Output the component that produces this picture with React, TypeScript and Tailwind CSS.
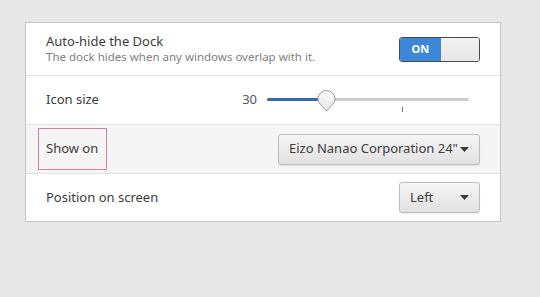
import React from "react";

const Caret = () => (
  <svg width="9" height="5" viewBox="0 0 9 5" className="block">
    <path d="M0 0 H9 L4.5 5 Z" fill="#3a3a3a" />
  </svg>
);

export default function App() {
  return (
    <div
      className="w-[540px] h-[297px] bg-[#e8e8e8] pl-[25px] pt-[22px]"
      style={{ fontFamily: '"Noto Sans", "Open Sans", sans-serif' }}
    >
      <div className="w-[476px] bg-white border border-[#c4c4c4] text-[#3c3c3c]">
        {/* Row 1 */}
        <div className="h-[53px] border-b border-[#e2e2e2] flex items-center justify-between pl-[20px] pr-[20px]">
          <div className="flex flex-col">
            <span className="text-[13px] leading-[16px]">Auto-hide the Dock</span>
            <span className="text-[11.5px] leading-[16px] text-[#808080]">
              The dock hides when any windows overlap with it.
            </span>
          </div>
          <div className="flex h-[25px] w-[81px] rounded-[3px] overflow-hidden border border-[#4a4a4a]">
            <div className="w-[41px] h-full bg-[#3d87d8] flex items-center justify-center text-white text-[11px] font-bold tracking-wide">
              ON
            </div>
            <div className="flex-1 h-full bg-gradient-to-b from-[#f2f2f2] to-[#e6e6e6]" />
          </div>
        </div>
        {/* Row 2 */}
        <div className="h-[49px] border-b border-[#e2e2e2] flex items-center justify-between pl-[20px] pr-[31px]">
          <span className="text-[13px]">Icon size</span>
          <div className="flex items-center">
            <span className="text-[13px] text-[#555] mr-[10px]">30</span>
            <div className="relative w-[202px] h-[20px]">
              <div className="absolute left-0 right-0 top-[8px] h-[3px] rounded-full bg-[#cdcdcd]" />
              <div className="absolute left-0 w-[60px] top-[8px] h-[3px] rounded-full bg-[#2f6db3]" />
              <div className="absolute left-[135px] top-[17px] w-[1px] h-[5px] bg-[#777]" />
              <svg
                className="absolute left-[50px] top-[0px]"
                width="19"
                height="22"
                viewBox="0 0 19 22"
              >
                <defs>
                  <linearGradient id="kg" x1="0" y1="0" x2="0" y2="1">
                    <stop offset="0" stopColor="#fbfbfb" />
                    <stop offset="1" stopColor="#e4e4e4" />
                  </linearGradient>
                </defs>
                <path
                  d="M9.5 0.5 A8.5 8.5 0 0 1 18 9 C18 12.5 15 15 9.5 21 C4 15 1 12.5 1 9 A8.5 8.5 0 0 1 9.5 0.5 Z"
                  fill="url(#kg)"
                  stroke="#9a9a9a"
                  strokeWidth="1"
                />
              </svg>
            </div>
          </div>
        </div>
        {/* Row 3 */}
        <div className="h-[49px] border-b border-[#e2e2e2] bg-[#f5f5f5] flex items-center justify-between pl-[12px] pr-[20px]">
          <div className="h-[42px] w-[69px] border border-[#e07f9c] flex items-center pl-[7px]">
            <span className="text-[13px]">Show on</span>
          </div>
          <div className="h-[31px] w-[202px] rounded-[3px] border border-[#bdbdbd] bg-gradient-to-b from-[#f6f6f6] to-[#e1e1e1] flex items-center justify-between pl-[10px] pr-[10px] shadow-[0_1px_1px_rgba(0,0,0,0.08)]">
            <span className="text-[13px] text-[#3c3c3c]">Eizo Nanao Corporation 24"</span>
            <Caret />
          </div>
        </div>
        {/* Row 4 */}
        <div className="h-[47px] flex items-center justify-between pl-[20px] pr-[20px]">
          <span className="text-[13px]">Position on screen</span>
          <div className="h-[31px] w-[81px] rounded-[3px] border border-[#bdbdbd] bg-gradient-to-b from-[#f6f6f6] to-[#e1e1e1] flex items-center justify-between pl-[10px] pr-[10px] shadow-[0_1px_1px_rgba(0,0,0,0.08)]">
            <span className="text-[13px] text-[#3c3c3c]">Left</span>
            <Caret />
          </div>
        </div>
      </div>
    </div>
  );
}
